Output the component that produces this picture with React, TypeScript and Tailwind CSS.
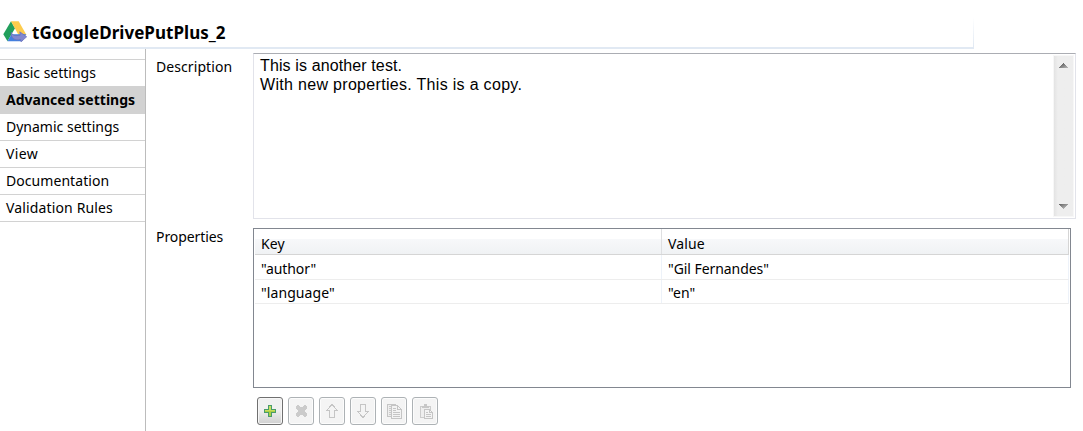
import type { ReactNode } from "react";

const navItems = [
  { label: "Basic settings", tracking: "tracking-normal" },
  { label: "Advanced settings", tracking: "tracking-[0.02px]", active: true },
  { label: "Dynamic settings", tracking: "tracking-normal" },
  { label: "View", tracking: "tracking-[0.35px]" },
  { label: "Documentation", tracking: "tracking-[0.06px]" },
  { label: "Validation Rules", tracking: "tracking-[0.14px]" },
];

function DriveLogo() {
  return (
    <svg width="24" height="22" viewBox="0 0 24 22" className="mt-px shrink-0">
      <path d="M8 0.3 L12 7.2 L4.5 20.3 L0.3 13.2 Z" fill="#219f5c" />
      <path d="M8 0.3 H15.7 L23.5 14 H15.5 Z" fill="#fdcc4e" />
      <path d="M8.4 13.3 H23.2 L19.2 20.3 H4.5 Z" fill="#4280e0" />
      <path
        d="M8.4 11.3 C9.2 14.6 12 15.2 17.2 14.2 L16.8 10.8 L23.7 15.8 L18 20.8 L17.6 18.5 C12 20 7.6 17.4 8.4 11.3 Z"
        fill="#8288cf"
        stroke="#6a70ba"
        strokeWidth="0.7"
      />
    </svg>
  );
}

function ToolButton({ enabled, children }: { enabled?: boolean; children: ReactNode }) {
  return (
    <button
      className={
        enabled
          ? "flex h-[28px] w-[26px] items-center justify-center rounded-[3px] border border-[#707070] bg-linear-to-b from-[#f0f0f0] from-45% to-[#d0d0d0] shadow-[inset_0_0_0_1px_#f7f7f7]"
          : "flex h-[28px] w-[26px] items-center justify-center rounded-[3px] border border-[#adb2b5] bg-[#f4f4f4] shadow-[inset_0_0_0_1px_#fcfcfc]"
      }
    >
      <svg width="16" height="16" viewBox="0 0 16 16" shapeRendering="crispEdges">
        {children}
      </svg>
    </button>
  );
}

function Scrollbar() {
  return (
    <div className="mt-px mr-px mb-px flex w-[21px] flex-col items-center justify-between border border-[#f7f7f7] bg-linear-to-r from-[#e3e3e3] to-[#eeeeee] to-20% pt-[7px] pb-[7px]">
      <svg width="9" height="5" viewBox="0 0 9 5" shapeRendering="crispEdges">
        <defs>
          <linearGradient id="arrow-up" x1="0" y1="0" x2="1" y2="1">
            <stop offset="0.2" stopColor="#606060" />
            <stop offset="1" stopColor="#b8b8b8" />
          </linearGradient>
        </defs>
        <path d="M4 0h1v1h1v1h1v1h1v1h1v1H0V4h1V3h1V2h1V1h1z" fill="url(#arrow-up)" />
      </svg>
      <svg width="9" height="5" viewBox="0 0 9 5" shapeRendering="crispEdges">
        <defs>
          <linearGradient id="arrow-down" x1="0" y1="0" x2="1" y2="1">
            <stop offset="0" stopColor="#606060" />
            <stop offset="0.8" stopColor="#b8b8b8" />
          </linearGradient>
        </defs>
        <path d="M0 0h9v1H8v1H7v1H6v1H5v1H4V4H3V3H2V2H1V1H0z" fill="url(#arrow-down)" />
      </svg>
    </div>
  );
}

export default function App() {
  return (
    <div className="flex h-[431px] w-[1083px] flex-col overflow-hidden bg-white font-['Noto_Sans',sans-serif] text-[14px] text-black">
      <header className="flex h-[49px] w-[974px] shrink-0 items-start border-b-2 border-[#e1e9f3]">
        <div className="flex h-[47px] flex-1 pt-[20px] pl-[3px]">
          <DriveLogo />
          <h1 className="ml-[5px] h-[24px] text-[17px] leading-[25px] font-bold tracking-[0.04px] whitespace-nowrap">
            tGoogleDrivePutPlus_2
          </h1>
        </div>
        <div className="mt-[17px] h-[30px] w-px bg-linear-to-b from-white to-[#e1e9f3]" />
      </header>
      <div className="flex min-h-0 flex-1">
        <nav className="w-[146px] shrink-0 border-r border-[#bcbcbc] pt-[10px]">
          <ul className="border-t border-[#d2d2d2]">
            {navItems.map((item) => (
              <li
                key={item.label}
                className={`border-b border-[#d2d2d2] pl-[6px] leading-[25px] whitespace-nowrap ${item.tracking} ${
                  item.active ? "-mt-px h-[28px] bg-[#d2d2d2] pt-px font-bold" : "h-[27px]"
                }`}
              >
                {item.label}
              </li>
            ))}
          </ul>
        </nav>
        <main className="flex flex-1 flex-col">
          <section className="flex pt-[4px]">
            <div className="w-[107px] pt-[4px] pl-[10px] leading-[20px] tracking-[0.08px]">Description</div>
            <div className="flex h-[166px] w-[823px] border border-[#e2e3ea] border-t-[#abadb3]">
              <div className="flex-1 pt-[2px] pl-[6px] font-['Liberation_Sans',sans-serif] text-[16px] leading-[19px]">
                <p className="tracking-[0.12px]">This is another test.</p>
                <p className="tracking-[0.31px]">With new properties. This is a copy.</p>
              </div>
              <Scrollbar />
            </div>
          </section>
          <section className="flex pt-[9px]">
            <div className="w-[107px] pl-[10px] leading-[18px] tracking-[-0.08px]">Properties</div>
            <div>
              <div className="h-[160px] w-[818px] border border-[#828790] pr-px pl-px">
                <div className="flex h-[26px] border-r border-b border-[#d5d5d5] bg-linear-to-b from-white from-38% via-[#f7f8fa] via-39% to-[#f0f2f4] leading-[29px]">
                  <div className="w-[407px] border-r border-[#dedfe1] pl-[6px] tracking-[0.1px]">Key</div>
                  <div className="pl-[6px] tracking-[0.15px]">Value</div>
                </div>
                <div className="flex h-[25px] border-r border-b border-[#ededed] border-r-[#edf2f9] leading-[27px]">
                  <div className="w-[407px] border-r border-[#edf2f9] pl-[6px] tracking-[-0.1px]">"author"</div>
                  <div className="pl-[6px] tracking-[-0.06px]">"Gil Fernandes"</div>
                </div>
                <div className="flex h-[24px] border-r border-b border-[#ededed] border-r-[#edf2f9] leading-[26px]">
                  <div className="w-[407px] border-r border-[#edf2f9] pl-[6px] tracking-[0.08px]">"language"</div>
                  <div className="pl-[6px] tracking-[0.1px]">"en"</div>
                </div>
              </div>
              <div className="mt-[9px] ml-[4px] flex gap-[5px]">
                <ToolButton enabled>
                  <path d="M6 2h4v4h4v4h-4v4H6v-4H2V6h4z" fill="#4a9c6a" />
                  <path d="M7 3h2v4h4v2H9v4H7V9H3V7h4z" fill="#c6dd5c" />
                  <path d="M3 8h10v1H9v4H7V9H3z" fill="#a9cf45" />
                </ToolButton>
                <ToolButton>
                  <path
                    d="M4 2h2v1h1v1h3V3h1V2h2v1h1v3h-1v1h-1v2h1v1h1v3h-1v1h-2v-1h-1v-1H7v1H6v1H4v-1H3v-3h1V9h1V7H4V6H3V3h1z"
                    fill="#cbcbcb"
                  />
                </ToolButton>
                <ToolButton>
                  <path d="M8 1.5 L13.5 7.5 H10.5 V14.5 H5.5 V7.5 H2.5 Z" fill="#f4f4f4" stroke="#c5c5c5" />
                </ToolButton>
                <ToolButton>
                  <path d="M5.5 1.5 H10.5 V8.5 H13.5 L8 14.5 L2.5 8.5 H5.5 Z" fill="#f4f4f4" stroke="#c5c5c5" />
                </ToolButton>
                <ToolButton>
                  <path d="M1.5 1.5h8v12h-8z" fill="#eeeeee" stroke="#c5c5c5" />
                  <path d="M3 3.5h2M3 5.5h2M3 7.5h2M3 9.5h2M3 11.5h2" stroke="#c9c9c9" />
                  <path d="M5.5 2.5h6l4 4v9h-10z" fill="#f3f3f3" stroke="#c5c5c5" />
                  <path d="M11.5 2.5v4h4M7 5.5h3M7 7.5h3M7 9.5h7M7 11.5h7M7 13.5h7" fill="none" stroke="#c5c5c5" />
                </ToolButton>
                <ToolButton>
                  <path d="M3.5 3.5h10v11h-10z" fill="#eeeeee" stroke="#cccccc" />
                  <path d="M5 5V3h2V1h3v2h2v2z" fill="#c7c7c7" />
                  <path d="M7.5 6.5h5l3 3v6h-8z" fill="#f3f3f3" stroke="#c5c5c5" />
                  <path d="M12.5 6.5v3h3M9 9.5h2M9 11.5h5M9 13.5h5" fill="none" stroke="#c5c5c5" />
                </ToolButton>
              </div>
            </div>
          </section>
        </main>
      </div>
    </div>
  );
}
